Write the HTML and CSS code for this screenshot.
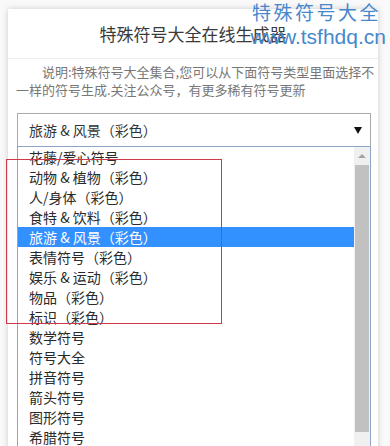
FILE: index.html
```html
<!DOCTYPE html>
<html>

	<head>
		<meta charset="UTF-8">
		<title>特殊符号大全在线生成器</title>
		<link rel="stylesheet" href="styles.css">
	</head>

	<body>
		<div class="card">
			<h1 class="title">特殊符号大全在线生成器</h1>
			<p class="desc">说明:特殊符号大全集合,您可以从下面符号类型里面选择不<br>一样的符号生成.关注公众号，有更多稀有符号更新</p>
			<div class="select">
				<span>旅游 &amp; 风景（彩色）</span>
				<span class="arrow"></span>
			</div>
			<div class="list">
				<ul class="options">
					<li>花藤/爱心符号</li>
					<li>动物 &amp; 植物（彩色）</li>
					<li>人/身体（彩色）</li>
					<li>食特 &amp; 饮料（彩色）</li>
					<li class="active">旅游 &amp; 风景（彩色）</li>
					<li>表情符号（彩色）</li>
					<li>娱乐 &amp; 运动（彩色）</li>
					<li>物品（彩色）</li>
					<li>标识（彩色）</li>
					<li>数学符号</li>
					<li>符号大全</li>
					<li>拼音符号</li>
					<li>箭头符号</li>
					<li>图形符号</li>
					<li>希腊符号</li>
				</ul>
				<div class="scrollbar">
					<div class="up"></div>
					<div class="thumb"></div>
				</div>
			</div>
		</div>
		<div class="mark">
			<div class="mark-cn">特殊符号大全</div>
			<div class="mark-en">www.tsfhdq.cn</div>
		</div>
		<div class="redbox"></div>
	</body>

</html>
```

FILE: styles.css
```css
* {
	margin: 0;
	padding: 0;
	list-style: none;
}

body {
	background: #f9f9f9;
	font-family: "Noto Sans CJK SC", "Liberation Sans", sans-serif;
	overflow: hidden;
	height: 446px;
	position: relative;
}

.card {
	margin: 9px 0 0 8px;
	width: 370px;
	height: 460px;
	background: #fff;
	box-shadow: 0 0 6px rgba(0, 0, 0, 0.18);
}

.title {
	height: 49px;
	line-height: 49px;
	text-align: center;
	font-size: 17px;
	font-weight: normal;
	color: #3a3a3a;
	border-bottom: 1px solid #eee;
}

.desc {
	padding: 4px 0 0 8px;
	font-size: 13px;
	line-height: 18px;
	color: #777;
	text-indent: 2em;
	white-space: nowrap;
}

.select {
	margin: 14px 0 0 9px;
	width: 354px;
	height: 33px;
	box-sizing: border-box;
	border: 1px solid #aaa;
	border-bottom: none;
	display: flex;
	align-items: center;
	justify-content: space-between;
	padding: 0 8px 0 11px;
	font-size: 14px;
	color: #333;
}

.arrow {
	border: 4px solid transparent;
	border-bottom: none;
	border-top: 7px solid #111;
}

.list {
	margin-left: 9px;
	width: 354px;
	box-sizing: border-box;
	border: 1px solid #8ea5c8;
	display: flex;
}

.options {
	flex: 1;
}

.options li {
	height: 20px;
	line-height: 20px;
	padding-left: 11px;
	font-size: 14px;
	color: #2a2a2a;
	white-space: nowrap;
}

.options .active {
	background: #3390ff;
	color: #fff;
}

.scrollbar {
	width: 16px;
	background: #f0f0f0;
}

.up {
	height: 18px;
	display: flex;
	justify-content: center;
	align-items: center;
}

.up::before {
	content: "";
	border: 4px solid transparent;
	border-top: none;
	border-bottom: 4px solid #a3a3a3;
}

.thumb {
	margin: 0 1px;
	height: 267px;
	background: #c1c1c1;
}

.mark {
	position: absolute;
	top: 0;
	right: 4px;
	color: #4787cc;
	text-align: right;
}

.mark-cn {
	font-size: 19px;
	line-height: 24px;
	letter-spacing: 2.5px;
	margin-right: 5px;
}

.mark-en {
	font-family: "Liberation Sans", sans-serif;
	font-size: 21px;
	line-height: 26px;
}

.redbox {
	position: absolute;
	left: 6px;
	top: 159px;
	width: 214px;
	height: 163px;
	border: 1px solid #d0394b;
}
```
